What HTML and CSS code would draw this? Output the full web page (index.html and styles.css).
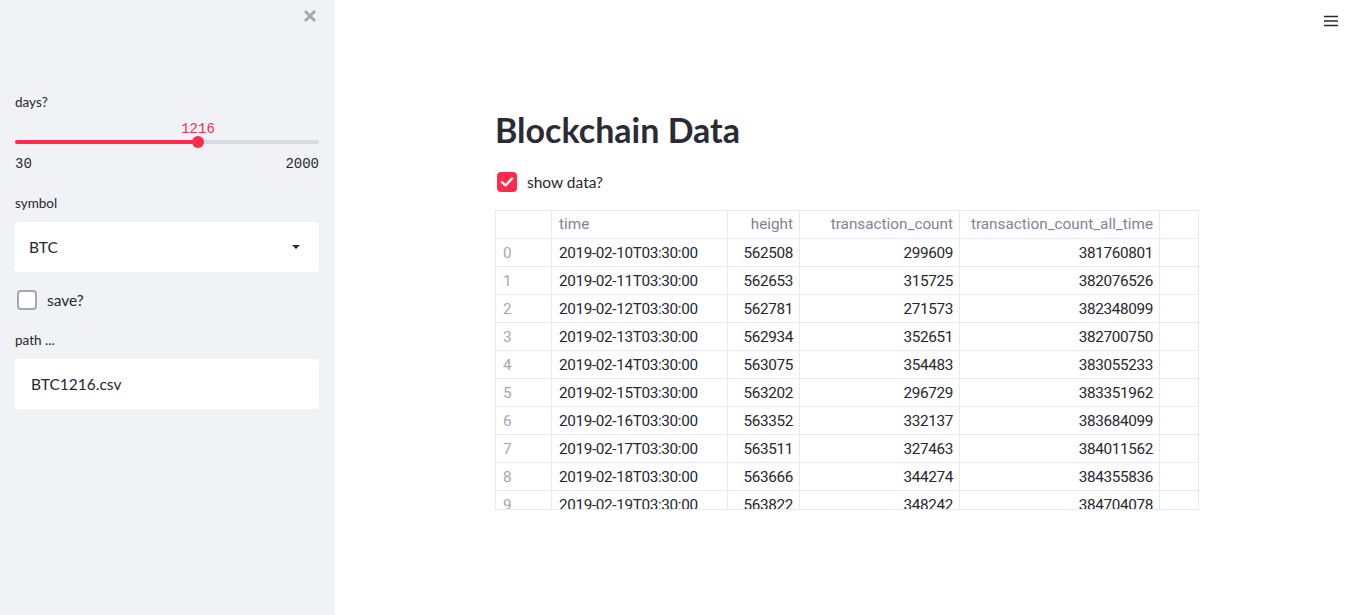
FILE: index.html
```html
<!DOCTYPE html>
<html>
<head>
<meta charset="utf-8">
<link rel="stylesheet" href="styles.css">
</head>
<body>
<div class="app">
  <aside class="sidebar">
    <div class="side-top">
      <svg class="close" width="14" height="14" viewBox="0 0 14 14"><path d="M2 2 L12 12 M12 2 L2 12" stroke="#a3a8b4" stroke-width="3" stroke-linecap="butt"/></svg>
    </div>
    <div class="widget slider-w">
      <div class="label">days?</div>
      <div class="slider">
        <div class="track"><div class="fill" style="width:60.2%"></div></div>
        <div class="thumb" style="left:60.2%"><span class="thumb-val">1216</span></div>
      </div>
      <div class="ticks"><span>30</span><span>2000</span></div>
    </div>
    <div class="widget">
      <div class="label">symbol</div>
      <div class="select"><span>BTC</span><svg width="10" height="6" viewBox="0 0 10 6"><path d="M1 1 L5 5 L9 1 Z" fill="#262730"/></svg></div>
    </div>
    <div class="check-row side-check">
      <span class="box"></span><span class="check-label">save?</span>
    </div>
    <div class="widget">
      <div class="label">path ...</div>
      <div class="input">BTC1216.csv</div>
    </div>
  </aside>
  <main class="main">
    <div class="topbar">
      <svg width="14" height="12" viewBox="0 0 14 12"><path d="M0 1.5 H14 M0 6 H14 M0 10.5 H14" stroke="#262730" stroke-width="1.6"/></svg>
    </div>
    <div class="content">
      <h1 class="title">Blockchain Data</h1>
      <div class="check-row main-check">
        <span class="box checked"><svg width="14" height="12" viewBox="0 0 14 12"><path d="M2 6.2 L5.5 9.5 L12 2.5" fill="none" stroke="#fff" stroke-width="2.4" stroke-linecap="round" stroke-linejoin="round"/></svg></span>
        <span class="check-label">show data?</span>
      </div>
      <div class="table">
        <div class="row head">
          <div class="c idx"></div><div class="c l">time</div><div class="c r">height</div><div class="c r">transaction_count</div><div class="c r">transaction_count_all_time</div><div class="c last"></div>
        </div>
        <div class="row"><div class="c idx">0</div><div class="c l">2019-02-10T03:30:00</div><div class="c r">562508</div><div class="c r">299609</div><div class="c r">381760801</div><div class="c last"></div></div>
        <div class="row"><div class="c idx">1</div><div class="c l">2019-02-11T03:30:00</div><div class="c r">562653</div><div class="c r">315725</div><div class="c r">382076526</div><div class="c last"></div></div>
        <div class="row"><div class="c idx">2</div><div class="c l">2019-02-12T03:30:00</div><div class="c r">562781</div><div class="c r">271573</div><div class="c r">382348099</div><div class="c last"></div></div>
        <div class="row"><div class="c idx">3</div><div class="c l">2019-02-13T03:30:00</div><div class="c r">562934</div><div class="c r">352651</div><div class="c r">382700750</div><div class="c last"></div></div>
        <div class="row"><div class="c idx">4</div><div class="c l">2019-02-14T03:30:00</div><div class="c r">563075</div><div class="c r">354483</div><div class="c r">383055233</div><div class="c last"></div></div>
        <div class="row"><div class="c idx">5</div><div class="c l">2019-02-15T03:30:00</div><div class="c r">563202</div><div class="c r">296729</div><div class="c r">383351962</div><div class="c last"></div></div>
        <div class="row"><div class="c idx">6</div><div class="c l">2019-02-16T03:30:00</div><div class="c r">563352</div><div class="c r">332137</div><div class="c r">383684099</div><div class="c last"></div></div>
        <div class="row"><div class="c idx">7</div><div class="c l">2019-02-17T03:30:00</div><div class="c r">563511</div><div class="c r">327463</div><div class="c r">384011562</div><div class="c last"></div></div>
        <div class="row"><div class="c idx">8</div><div class="c l">2019-02-18T03:30:00</div><div class="c r">563666</div><div class="c r">344274</div><div class="c r">384355836</div><div class="c last"></div></div>
        <div class="row"><div class="c idx">9</div><div class="c l">2019-02-19T03:30:00</div><div class="c r">563822</div><div class="c r">348242</div><div class="c r">384704078</div><div class="c last"></div></div>
      </div>
    </div>
  </main>
</div>
</body>
</html>
```
FILE: styles.css
```css
* { box-sizing: border-box; }
html, body { margin: 0; padding: 0; }
body {
  font-family: "Lato", "Open Sans", sans-serif;
  color: #262730;
  background: #fff;
  width: 1363px;
  height: 615px;
  overflow: hidden;
}
.app { display: flex; height: 615px; }

.sidebar {
  width: 335px;
  flex: none;
  background: #f0f2f6;
  padding: 0 16px 0 15px;
}
.side-top {
  height: 92px;
  display: flex;
  justify-content: flex-end;
  padding-top: 9px;
  padding-right: 2px;
}
.close { display: block; }
.label {
  font-size: 13.5px;
  line-height: 20px;
  height: 20px;
  color: #262730;
}
.slider {
  position: relative;
  height: 40px;
  padding-top: 28px;
}
.track {
  height: 4px;
  border-radius: 2px;
  background: #d5dae5;
}
.fill {
  height: 4px;
  border-radius: 2px;
  background: #ff2b4b;
}
.thumb {
  position: absolute;
  top: 24px;
  width: 12px;
  height: 12px;
  margin-left: -6px;
  border-radius: 50%;
  background: #ff2b4b;
}
.thumb-val {
  position: absolute;
  bottom: 11px;
  left: 50%;
  transform: translateX(-50%);
  font-family: "Liberation Mono", "DejaVu Sans Mono", monospace;
  font-size: 14px;
  color: #ff2b4b;
  line-height: 16px;
}
.ticks {
  display: flex;
  justify-content: space-between;
  font-family: "Liberation Mono", "DejaVu Sans Mono", monospace;
  font-size: 14px;
  line-height: 16px;
  height: 16px;
  margin-top: 4px;
  color: #262730;
}
.slider-w { margin-bottom: 21px; }
.select {
  margin-top: 9px;
  height: 50px;
  background: #fff;
  border-radius: 4px;
  display: flex;
  align-items: center;
  justify-content: space-between;
  padding: 0 18px 0 14px;
  font-size: 15.5px;
}
.check-row {
  display: flex;
  align-items: center;
  font-size: 15.5px;
}
.side-check {
  height: 20px;
  margin-top: 18px;
  margin-bottom: 20px;
  padding-left: 2px;
}
.box {
  width: 20px;
  height: 20px;
  border-radius: 4px;
  border: 2px solid #a3a8b4;
  background: #fff;
  flex: none;
  display: flex;
  align-items: center;
  justify-content: center;
}
.box.checked {
  border: none;
  background: #ff2b4b;
}
.check-label { margin-left: 10px; }
.input {
  margin-top: 9px;
  height: 50px;
  background: #fff;
  border-radius: 4px;
  display: flex;
  align-items: center;
  padding-left: 16px;
  font-size: 15.5px;
}

.main {
  flex: 1;
  display: flex;
  flex-direction: column;
}
.topbar {
  height: 42px;
  display: flex;
  justify-content: flex-end;
  padding: 15px 25px 0 0;
}
.topbar svg { display: block; }
.content {
  padding-left: 160px;
  width: 864px;
}
.title {
  margin: 66px 0 0 0;
  font-size: 34px;
  font-weight: 700;
  line-height: 44px;
  color: #2a2b36;
  letter-spacing: 0;
}
.main-check {
  height: 20px;
  margin-top: 20px;
  padding-left: 2px;
}
.table {
  margin-top: 18px;
  width: 704px;
  height: 300px;
  overflow: hidden;
  border: 1px solid #e6eaf1;
  font-family: "Roboto", "Lato", sans-serif;
  font-size: 15.3px;
}
.row {
  display: grid;
  grid-template-columns: 56px 176px 72px 160px 200px 38px;
  height: 28px;
  border-bottom: 1px solid #e6eaf1;
}
.c {
  border-right: 1px solid #e6eaf1;
  line-height: 27px;
  padding: 1px 6px 0 7px;
  white-space: nowrap;
  overflow: hidden;
  letter-spacing: -0.35px;
}
.head .c { color: #808495; letter-spacing: 0; padding-top: 0; }
.c.last { border-right: none; }
.c.r { text-align: right; }
.c.idx { color: #a3a8b4; }
```
